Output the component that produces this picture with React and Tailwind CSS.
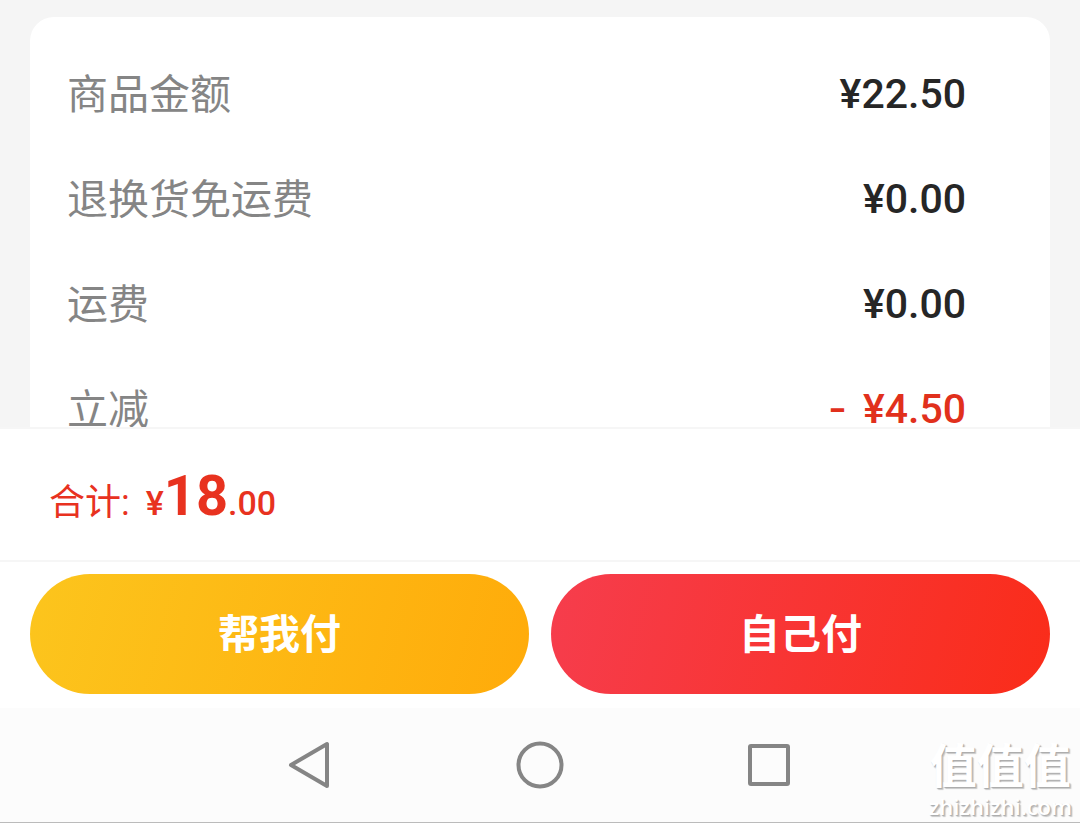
import React from 'react';

const rows = [
  { label: '商品金额', amount: '¥22.50' },
  { label: '退换货免运费', amount: '¥0.00' },
  { label: '运费', amount: '¥0.00' },
  { label: '立减', amount: '¥4.50', discount: true },
];

function PriceRow({ label, amount, discount }) {
  return (
    <div className="flex h-[105px] items-center justify-between text-[41px] leading-[60px]">
      <dt className="pt-0.5 text-[#858585]">{label}</dt>
      <dd className={`font-medium ${discount ? 'text-[#e1301c]' : 'text-[#262626]'}`}>
        {discount && <span className="mr-4 font-['Inter']">-</span>}
        {amount}
      </dd>
    </div>
  );
}

function NavButton({ label, children }) {
  return (
    <button type="button" aria-label={label} className="flex items-center justify-center">
      <svg viewBox="0 0 48 48" className="size-12" fill="none" stroke="#858585" strokeWidth="4" strokeLinejoin="round">
        {children}
      </svg>
    </button>
  );
}

function Watermark() {
  return (
    <div className="pointer-events-none absolute right-2 bottom-1 text-center text-white [text-shadow:1px_1px_1px_#aaa,2px_2px_1px_#ccc]">
      <div className="text-[47px] leading-[54px] font-bold">值值值</div>
      <div className="font-['Open_Sans'] text-[22px] leading-6 font-semibold">zhizhizhi.com</div>
    </div>
  );
}

export default function App() {
  return (
    <div className="flex h-screen flex-col bg-[#f5f5f5] font-['Roboto','Noto_Sans_CJK_SC',sans-serif]">
      <main className="min-h-0 flex-1 overflow-hidden px-[30px] pt-[17px]">
        <dl className="rounded-[24px] bg-white py-6 pr-[84px] pl-[37px]">
          {rows.map((row) => (
            <PriceRow key={row.label} {...row} />
          ))}
        </dl>
      </main>

      <footer className="shrink-0 bg-white">
        <div className="flex h-[135px] items-center border-t-2 border-b-2 border-[#f6f6f6] px-[49px] pt-2.5">
          <p className="flex items-baseline text-[36px] leading-[60px] text-[#e8321f]">
            <span className="mr-4">合计:</span>
            <span className="text-[34px] font-medium">¥</span>
            <strong className="text-[56px] font-bold">18</strong>
            <span className="text-[34px] font-medium">.00</span>
          </p>
        </div>

        <div className="grid grid-cols-2 gap-[22px] px-[30px] pt-3 pb-[14px]">
          <button
            type="button"
            className="h-[120px] rounded-full bg-linear-[105deg,#fcc51d,#ffab0a] pt-1 text-[41px] font-bold text-white"
          >
            帮我付
          </button>
          <button
            type="button"
            className="h-[120px] rounded-full bg-linear-[105deg,#f63d4d,#fa2c19] pt-1 text-[41px] font-bold text-white"
          >
            自己付
          </button>
        </div>

        <nav className="relative h-[115px] border-b border-[#bbb] bg-[#fcfcfc]">
          <div className="mx-auto grid h-full w-[64%] grid-cols-3">
            <NavButton label="返回">
              <path d="M41 3v42L5 24z" />
            </NavButton>
            <NavButton label="主页">
              <circle cx="24" cy="24" r="21.5" />
            </NavButton>
            <NavButton label="最近任务">
              <rect x="4" y="5" width="38" height="38" rx="1" />
            </NavButton>
          </div>
          <Watermark />
        </nav>
      </footer>
    </div>
  );
}
